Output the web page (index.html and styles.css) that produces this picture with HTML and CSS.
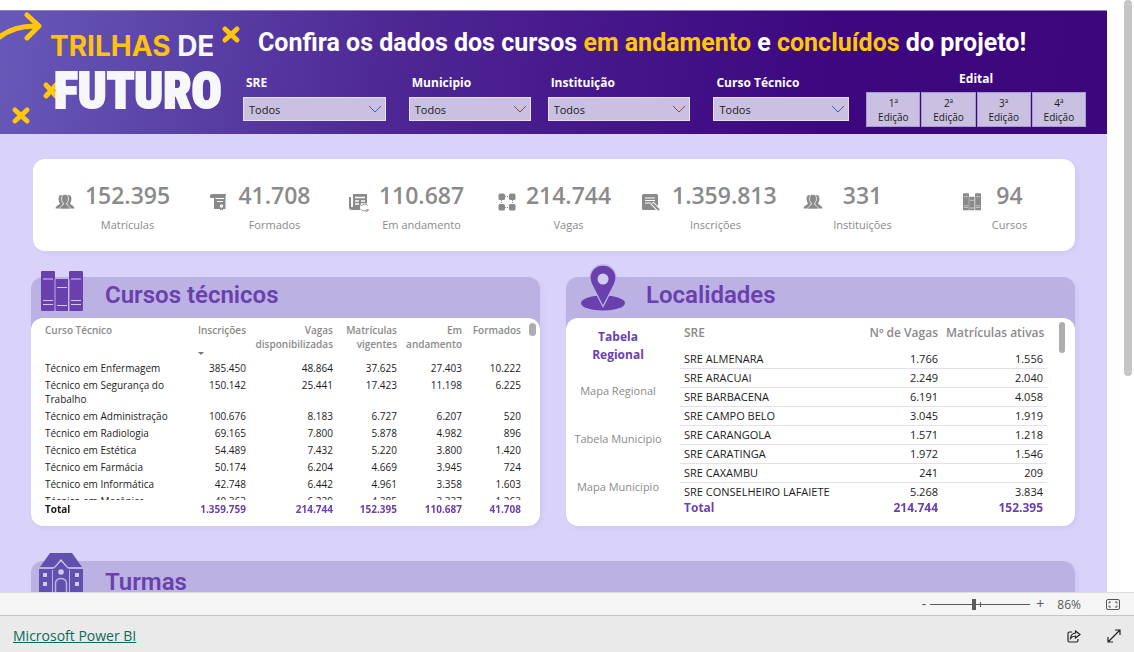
FILE: index.html
```html
<!DOCTYPE html>
<html lang="pt-BR">
<head>
<meta charset="utf-8">
<title>Trilhas de Futuro</title>
<meta name="viewport" content="width=device-width, initial-scale=1">
<link rel="stylesheet" href="styles.css">
</head>
<body>
<svg class="defs" width="0" height="0" aria-hidden="true">
  <symbol id="chevron" viewBox="0 0 14 8"><path d="M1 1l6 6 6-6" fill="none" stroke="currentColor"/></symbol>
  <symbol id="people" viewBox="0 0 20 16">
    <path d="M6.500 1C4.300 1 3.200 3 3.600 5.500C3.800 7.500 4.300 8.500 5 9.300C5 11 1 11 .5 14.500H6C6 11.500 8 11 8 9.500C6 6.500 6 3.500 7.500 1.400zM13.500 1C15.700 1 16.800 3 16.400 5.500C16.200 7.500 15.700 8.500 15 9.300C15 11 19 11 19.500 14.500H14C14 11.500 12 11 12 9.500C14 6.500 14 3.500 12.500 1.400z" fill="currentColor"/>
    <path d="M10 .5C7.500 .5 6.200 2.300 6.600 5.200C6.800 7.200 7.500 8.400 8.500 9.300C8.700 12 4.800 11.500 4.500 15H15.500C15.200 11.500 11.300 12 11.500 9.300C12.500 8.400 13.200 7.200 13.400 5.200C13.800 2.300 12.500 .5 10 .5z" fill="currentColor" stroke="#fff" stroke-width=".6"/>
  </symbol>
  <symbol id="books" viewBox="0 0 42 41">
    <path d="M1 0h12a1 1 0 0 1 1 1v38a1 1 0 0 1-1 1H1a1 1 0 0 1-1-1V1a1 1 0 0 1 1-1zM15 8h12v32H15a1 1 0 0 1-1-1V9a1 1 0 0 1 1-1zM29 0h12a1 1 0 0 1 1 1v38a1 1 0 0 1-1 1H29a1 1 0 0 1-1-1V1a1 1 0 0 1 1-1z" fill="currentColor"/>
    <path d="M2 8h10M2 29.500h10M2 33.500h10M16 16.500h10M16 34.500h10M30 8h10M30 29.500h10M30 33.500h10" fill="none" stroke="var(--line)" stroke-width="1.200"/>
    <path d="M14 8v32M28 8v32" stroke="var(--line)" stroke-width=".8"/>
  </symbol>
</svg>

<main class="viewer">
  <div class="report">
    <header class="banner">
      <svg class="logo" width="243" height="124" viewBox="0 0 243 124" role="img" aria-label="Trilhas de Futuro">
        <g fill="none" stroke="#ffc60b" stroke-width="5" stroke-linecap="round" stroke-linejoin="round">
          <path d="M-3 28Q13 14 38 15M27 4l12 11-12 12" />
          <path d="M225 18l12 11M237 18l-12 11M46 74l10 11M56 74l-10 11M15 99l12 11M27 99l-12 11"/>
        </g>
        <text class="logo-top" x="50" y="45"><tspan fill="#ffc20e">TRILHAS</tspan> DE</text>
        <text class="logo-main" x="54" y="97">FUTURO</text>
      </svg>
      <div class="banner-body">
        <h1>Confira os dados dos cursos <em>em andamento</em> e <em>concluídos</em> do projeto!</h1>
        <form class="filters">
          <div class="filter short"><label for="sre">SRE</label><div class="pick blue"><select id="sre"><option>Todos</option></select><svg width="14" height="8"><use href="#chevron"/></svg></div></div>
          <div class="filter"><label for="mun">Municipio</label><div class="pick"><select id="mun"><option>Todos</option></select><svg width="14" height="8"><use href="#chevron"/></svg></div></div>
          <div class="filter short"><label for="inst">Instituição</label><div class="pick"><select id="inst"><option>Todos</option></select><svg width="14" height="8"><use href="#chevron"/></svg></div></div>
          <div class="filter"><label for="curso">Curso Técnico</label><div class="pick blue"><select id="curso"><option>Todos</option></select><svg width="14" height="8"><use href="#chevron"/></svg></div></div>
          <fieldset class="editions">
            <legend>Edital</legend>
            <div class="edition-row">
              <button type="button">1ª<br>Edição</button>
              <button type="button">2ª<br>Edição</button>
              <button type="button">3ª<br>Edição</button>
              <button type="button">4ª<br>Edição</button>
            </div>
          </fieldset>
        </form>
      </div>
    </header>

    <section class="kpis" aria-label="Indicadores">
      <ul>
        <li><svg width="20" height="16"><use href="#people"/></svg><b>152.395</b><span>Matrículas</span></li>
        <li><svg width="18" height="18" viewBox="0 0 18 18"><path d="M2.500 1H16v1.500h-.5V16H13v1.500l-1.500-1-1.500 1V16H4V5H1.500A1.500 1.500 0 0 1 1 1.500z" fill="#8a8a8a"/><path d="M5.500 5.500H14M7 8.500h6" stroke="#fff"/><circle cx="11.500" cy="13" r="1.700" fill="#fff"/></svg><b>41.708</b><span>Formados</span></li>
        <li><svg width="20" height="19" viewBox="0 0 20 19"><path d="M4 1h14v16H3a3 3 0 0 1-3-3V4h2v10h2z" fill="#8a8a8a"/><path d="M6 4.500h10M6 8h4M12 8h4M6 11h4M12 11h3" stroke="#fff" stroke-width="1.300"/><circle cx="15.500" cy="14.500" r="4.500" fill="#fff"/><path d="M12.500 13a3.500 3.500 0 0 1 6-.5M18.500 16a3.500 3.500 0 0 1-6 .5M17 18h2v-2" fill="none" stroke="#8a8a8a" stroke-width="1"/></svg><b>110.687</b><span>Em andamento</span></li>
        <li><svg width="18" height="18" viewBox="0 0 18 18"><g fill="#8a8a8a"><rect x=".5" y=".5" width="6.500" height="6.500" rx="1.500"/><rect x="11" y=".5" width="6.500" height="6.500" rx="1.500"/><rect x=".5" y="11" width="6.500" height="6.500" rx="1.500"/><rect x="11" y="11" width="6.500" height="6.500" rx="1.500"/></g><path d="M7 3.500h4M7 14.500h4M3.500 7v4M14.500 7v4" stroke="#8a8a8a" stroke-dasharray="1 1"/></svg><b>214.744</b><span>Vagas</span></li>
        <li class="tight"><svg width="18" height="18" viewBox="0 0 18 18"><rect x="0" y="1" width="16" height="16" rx="1.500" fill="#8a8a8a"/><path d="M3 5h10M3 7.500h10M3 10h6" stroke="#fff"/><path d="M10 10l7 7" stroke="#fff" stroke-width="4"/><path d="M10.500 10.500l6.500 6.500" stroke="#8a8a8a" stroke-width="2"/></svg><b>1.359.813</b><span>Inscrições</span></li>
        <li class="spaced"><svg width="20" height="16"><use href="#people"/></svg><b>331</b><span>Instituições</span></li>
        <li class="near"><svg width="18" height="18"><use href="#books"/></svg><b>94</b><span>Cursos</span></li>
      </ul>
    </section>

    <div class="panels">
      <section class="panel">
        <header class="panel-head">
          <svg class="books" width="42" height="41"><use href="#books"/></svg>
          <h2>Cursos técnicos</h2>
        </header>
        <div class="panel-body courses">
          <div class="scroll">
            <table>
              <colgroup><col><col class="c1"><col class="c2"><col class="c3"><col class="c4"><col class="c5"></colgroup>
              <thead><tr><th scope="col">Curso Técnico</th><th scope="col" aria-sort="descending">Inscrições<i class="sort"></i></th><th scope="col">Vagas disponibilizadas</th><th scope="col">Matrículas vigentes</th><th scope="col">Em andamento</th><th scope="col">Formados</th></tr></thead>
              <tbody>
                <tr><td>Técnico em Enfermagem</td><td>385.450</td><td>48.864</td><td>37.625</td><td>27.403</td><td>10.222</td></tr>
                <tr><td>Técnico em Segurança do Trabalho</td><td>150.142</td><td>25.441</td><td>17.423</td><td>11.198</td><td>6.225</td></tr>
                <tr><td>Técnico em Administração</td><td>100.676</td><td>8.183</td><td>6.727</td><td>6.207</td><td>520</td></tr>
                <tr><td>Técnico em Radiologia</td><td>69.165</td><td>7.800</td><td>5.878</td><td>4.982</td><td>896</td></tr>
                <tr><td>Técnico em Estética</td><td>54.489</td><td>7.432</td><td>5.220</td><td>3.800</td><td>1.420</td></tr>
                <tr><td>Técnico em Farmácia</td><td>50.174</td><td>6.204</td><td>4.669</td><td>3.945</td><td>724</td></tr>
                <tr><td>Técnico em Informática</td><td>42.748</td><td>6.442</td><td>4.961</td><td>3.358</td><td>1.603</td></tr>
                <tr><td>Técnico em Mecânica</td><td>40.363</td><td>6.229</td><td>4.385</td><td>3.337</td><td>1.263</td></tr>
              </tbody>
              <tfoot><tr><th scope="row">Total</th><td>1.359.759</td><td>214.744</td><td>152.395</td><td>110.687</td><td>41.708</td></tr></tfoot>
            </table>
          </div>
          <div class="bar"></div>
        </div>
      </section>

      <section class="panel">
        <header class="panel-head">
          <svg class="pin" width="46" height="48" viewBox="0 0 46 48"><ellipse cx="23" cy="39" rx="22" ry="7.500" fill="#6a3fae"/><path d="M23 1C15.500 1 10 6.500 10 14c0 4 2 7.500 4 11l9 17.500L32 25c2-3.500 4-7 4-11C36 6.500 30.500 1 23 1z" fill="#6a3fae" stroke="#bbb2e3" stroke-width="1.300"/><circle cx="23" cy="15" r="5.500" fill="#d2caf3"/></svg>
          <h2>Localidades</h2>
        </header>
        <div class="panel-body places">
          <nav class="tabs">
            <button type="button" class="on">Tabela Regional</button>
            <button type="button">Mapa Regional</button>
            <button type="button">Tabela Municipio</button>
            <button type="button">Mapa Municipio</button>
          </nav>
          <div class="scroll">
            <table>
              <colgroup><col><col class="p1"><col class="p2"></colgroup>
              <thead><tr><th scope="col">SRE</th><th scope="col">Nº de Vagas</th><th scope="col">Matrículas ativas</th></tr></thead>
              <tbody>
                <tr><td>SRE ALMENARA</td><td>1.766</td><td>1.556</td></tr>
                <tr><td>SRE ARACUAI</td><td>2.249</td><td>2.040</td></tr>
                <tr><td>SRE BARBACENA</td><td>6.191</td><td>4.058</td></tr>
                <tr><td>SRE CAMPO BELO</td><td>3.045</td><td>1.919</td></tr>
                <tr><td>SRE CARANGOLA</td><td>1.571</td><td>1.218</td></tr>
                <tr><td>SRE CARATINGA</td><td>1.972</td><td>1.546</td></tr>
                <tr><td>SRE CAXAMBU</td><td>241</td><td>209</td></tr>
                <tr><td>SRE CONSELHEIRO LAFAIETE</td><td>5.268</td><td>3.834</td></tr>
              </tbody>
              <tfoot><tr><th scope="row">Total</th><td>214.744</td><td>152.395</td></tr></tfoot>
            </table>
          </div>
          <div class="bar"></div>
        </div>
      </section>

      <section class="panel wide">
        <header class="panel-head">
          <svg class="school" width="44" height="46" viewBox="0 0 44 46"><path d="M11 0h22l10 14H29l-7-8-7 8H1z" fill="#6250b0"/><path d="M0 16h14l8-8 8 8h14v30H0z" fill="#6250b0"/><path d="M13.500 17v23M30.500 17v23" stroke="#bbb2e3"/><circle cx="22" cy="19" r="2.800" fill="#d2caf3"/><path d="M16.500 46V30a5.500 4.500 0 0 1 11 0v16" fill="none" stroke="#bbb2e3" stroke-width="1.500"/><g fill="#d2caf3"><path d="M4 20h4v4H4zM4 29h4v4H4zM36 20h4v4h-4zM36 29h4v4h-4z"/></g><path d="M15 15.500l7-8 7 8" fill="none" stroke="#d2caf3"/></svg>
          <h2>Turmas</h2>
        </header>
      </section>
    </div>
  </div>
  <div class="page-scroll"><div></div></div>
</main>

<div class="zoombar">
  <button type="button" aria-label="Reduzir">-</button>
  <label class="zoom"><input type="range" min="0" max="100" value="43" aria-label="Zoom"><i></i></label>
  <button type="button" aria-label="Ampliar">+</button>
  <span>86%</span>
  <button type="button" aria-label="Ajustar à página"><svg width="14" height="11" viewBox="0 0 14 11" fill="none" stroke="#555"><rect x=".5" y=".5" width="13" height="10" rx="1.500"/><path d="M3 4.500V3h2M9 3h2v1.500M3 6.500V8h2M9 8h2V6.500"/></svg></button>
</div>
<footer class="footer">
  <a href="#">Microsoft Power BI</a>
  <button type="button" aria-label="Compartilhar"><svg width="14" height="13" viewBox="0 0 14 13" fill="none" stroke="#222" stroke-width="1.200"><path d="M5 2H2.500A1.500 1.500 0 0 0 1 3.500v7A1.500 1.500 0 0 0 2.500 12h7a1.500 1.500 0 0 0 1.500-1.500V9"/><path d="M8.500 1l4.500 3.500L8.500 8V6C6.500 6 5 6.500 3.500 8.500 3.800 5.500 5.500 3.200 8.500 3z"/></svg></button>
  <button type="button" aria-label="Tela cheia"><svg width="14" height="14" viewBox="0 0 14 14" fill="none" stroke="#222" stroke-width="1.200"><path d="M1.500 12.500l11-11M8 1h5v5M1 8v5h5"/></svg></button>
</footer>
</body>
</html>
```
FILE: styles.css
```css
* { box-sizing: border-box; }

body {
  margin: 0;
  height: 100vh;
  display: flex;
  flex-direction: column;
  font-family: "Open Sans", "Noto Sans", sans-serif;
  font-size: 12px;
  color: #1b1b1b;
  background: #fff;
}

button {
  border: 0;
  padding: 0;
  background: none;
  font: inherit;
  color: inherit;
}

.defs { position: absolute; }

.viewer {
  flex: 1;
  min-height: 0;
  display: flex;
  overflow: hidden;
}

.report {
  flex: 1;
  margin-top: 10px;
  background: #d9d2fa;
}

.page-scroll { width: 27px; padding-left: 17px; }
.page-scroll div {
  width: 8px;
  height: 376px;
  border-radius: 4px;
  background: #c6c6c6;
}

/* Banner */
.banner {
  display: flex;
  height: 124px;
  border-top: 1px solid #8d80c4;
  background: linear-gradient(97deg, #6759b9 0%, #5940a5 18%, #4e2894 35%, #45168a 55%, #3d077f 75%, #3c067c 100%);
}
.logo { flex: none; }
.logo-top {
  font: 700 28px Inter, sans-serif;
  fill: #f7f7fa;
}
.logo-main {
  font: 900 50px "Roboto Condensed", "Open Sans Condensed", Roboto, sans-serif;
  fill: #f7f7fa;
  stroke: #f7f7fa;
  stroke-width: 2px;
}
.banner-body { flex: 1; padding-right: 21px; }
h1 {
  margin: 16px 0 0;
  padding-left: 15px;
  font: 700 25px/32px Roboto, sans-serif;
  color: #fff;
  white-space: nowrap;
}
h1 em { font-style: normal; color: #ffc60b; }

.filters {
  display: grid;
  grid-template-columns: 149fr 122fr 149fr 136fr 220fr;
  column-gap: 17px;
  margin-top: 10px;
}
.filter { padding-top: 5px; }
.short { padding-right: 6px; }
.filter label {
  display: block;
  padding-left: 3px;
  margin-bottom: 5px;
  line-height: 18px;
  font-weight: 700;
  color: #fff;
}
.pick { position: relative; color: #8a4a4a; }
.blue { color: #3d62a8; }
.pick svg { position: absolute; right: 4px; top: 8px; }
.pick select {
  display: block;
  appearance: none;
  width: 100%;
  height: 24px;
  padding: 0 5px;
  border: 1px solid #e6e1f1;
  border-radius: 0;
  background: #cac0e1;
  font: 11px "Open Sans", sans-serif;
  color: #1b1b1b;
}
.editions { margin: 0; padding: 0; border: 0; min-width: 0; }
.editions legend {
  padding: 1px 0 0;
  margin: 0 auto 4px;
  line-height: 18px;
  font-weight: 700;
  color: #fff;
}
.edition-row { display: grid; grid-template-columns: repeat(4, 1fr); gap: 1px; }
.edition-row button {
  height: 35px;
  border: 1px solid #a99bcd;
  background: #cac0e1;
  font-size: 10px;
  line-height: 14px;
}

/* Indicators */
.kpis {
  margin: 25px 32px 0 33px;
  height: 92px;
  padding: 19px 0 0 21px;
  border-radius: 12px;
  background: #fff;
  box-shadow: 2px 2px 4px #cfc7f0;
}
.kpis ul {
  display: grid;
  grid-template-columns: repeat(7, 1fr);
  margin: 0 -8px 0 0;
  padding: 0;
  list-style: none;
  color: #8a8a8a;
}
.kpis li {
  display: grid;
  grid-template-columns: 1fr auto 1fr;
  column-gap: 10px;
  align-items: center;
}
.kpis svg { --line: #fff; justify-self: end; margin-top: 14px; }
.kpis .tight { column-gap: 12px; }
.kpis .spaced { column-gap: 20px; }
.kpis .near { column-gap: 15px; }
.kpis b { font: 600 23px/34px "Open Sans", sans-serif; }
.kpis span {
  grid-column: 1 / -1;
  margin-top: 4px;
  text-align: center;
  font-size: 11px;
  line-height: 18px;
}

/* Panels */
.panels {
  display: grid;
  grid-template-columns: 1fr 1fr;
  gap: 35px 26px;
  margin: 26px 32px 0 31px;
}
.panel {
  border-radius: 12px;
  background: #bbb2e3;
  box-shadow: 2px 2px 4px #cfc7f0;
}
.wide { grid-column: 1 / -1; height: 200px; }
.panel-head { display: flex; height: 41px; }
.panel-head svg { --line: #d2caf3; flex: none; }
.panel-head h2 {
  margin: 0;
  font: 600 24px/36px Roboto, sans-serif;
  color: #6a3fae;
}
.books { color: #6a3fae; margin: -6px 22px 0 10px; }
.pin { margin: -13px 20px 0 14px; }
.school { margin: -8px 22px 0 8px; }
.panel.wide h2 { line-height: 42px; }

.panel-body {
  display: flex;
  height: 208px;
  border-radius: 12px;
  background: #fff;
}
.scroll { flex: 1; overflow: hidden; }
.bar { flex: none; background: #adadad; border-radius: 4px; }

table { width: 100%; table-layout: fixed; border-collapse: collapse; }
th, td { padding: 0; text-align: right; vertical-align: top; }
th:first-child, td:first-child { text-align: left; }
thead th { color: #8a8a8a; font-weight: 600; }
tfoot { position: sticky; bottom: 0; background: #fff; }
tfoot td { color: #6a3fae; font-weight: 700; }

.courses { padding: 5px 4px 8px 14px; }
.courses .bar { width: 7px; height: 13px; margin-left: 8px; }
.courses table { font-size: 10px; line-height: 14px; }
.courses thead th { height: 37px; }
.courses tbody td { padding: 1px 0 2px; }
.courses tfoot tr { height: 18px; }
.courses tfoot th, .courses tfoot td { padding-top: 2px; }
.courses td:first-child { padding-right: 16px; }
.c1 { width: 62px; }
.c2 { width: 87px; }
.c3 { width: 64px; }
.c4 { width: 65px; }
.c5 { width: 59px; }
.sort {
  display: block;
  width: 0;
  margin: 15px 0 2px 14px;
  border: 3px solid transparent;
  border-top-color: #777;
  border-bottom: 0;
}

.tabs {
  display: grid;
  grid-template-rows: 49px repeat(3, 48px);
  width: 104px;
  margin-right: 10px;
  color: #8a8a8a;
  font-size: 11px;
  line-height: 18px;
}
.tabs .on { color: #6a3fae; font-size: 12px; font-weight: 700; padding: 6px 20px 0; }
.places { padding-right: 10px; }
.places .scroll { height: 198px; }
.places .bar { width: 6px; height: 31px; margin: 4px 0 0 12px; }
.places table { font-size: 11px; line-height: 18px; }
.places th, .places td { padding: 0 4px; }
.places thead th { padding-top: 6px; height: 32px; font-size: 12px; white-space: nowrap; }
.places tbody td { border-bottom: 1px solid #e4dff7; white-space: nowrap; }
.places tbody tr:last-child td { border: 0; }
.places tfoot { font-size: 12px; line-height: 16px; }
.places tfoot th { color: #6a3fae; }
.p1 { width: 90px; }
.p2 { width: 105px; }

/* Bottom bars */
.zoombar {
  display: flex;
  justify-content: flex-end;
  align-items: center;
  height: 24px;
  padding-right: 14px;
  border-top: 1px solid #dedede;
  border-bottom: 1px solid #c4c4c4;
  background: #f5f5f5;
  color: #5a5a5a;
}
.zoombar button { display: flex; font-size: 14px; line-height: 20px; }
.zoombar span { margin: 0 25px 0 13px; }
.zoom { position: relative; display: flex; margin: 0 6px 0 4px; }
.zoom i {
  position: absolute;
  left: 50px;
  top: 3px;
  width: 1px;
  height: 5px;
  background: #5a5a5a;
}
.zoom input {
  appearance: none;
  width: 100px;
  height: 11px;
  margin: 0;
  background: linear-gradient(#5a5a5a, #5a5a5a) center / 100% 1px no-repeat;
}
.zoom input::-webkit-slider-thumb {
  appearance: none;
  width: 4px;
  height: 11px;
  background: #5a5a5a;
}
.footer {
  display: flex;
  align-items: center;
  gap: 26px;
  height: 36px;
  padding: 4px 13px 0;
  background: #eaeaea;
}
.footer a { margin-right: auto; font-size: 14px; line-height: 20px; color: #0b6a5e; }
.footer button { display: flex; }
```
